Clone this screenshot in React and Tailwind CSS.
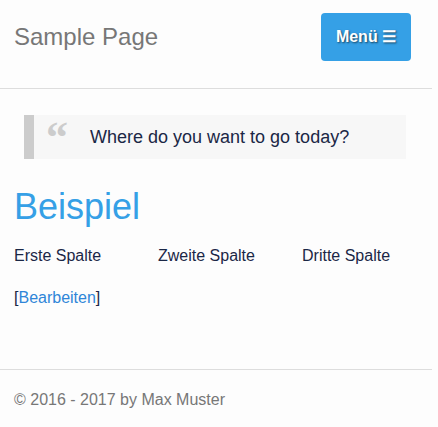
import React from 'react';

const columns = ['Erste Spalte', 'Zweite Spalte', 'Dritte Spalte'];

const App = () => {
  return (
    <div className="min-h-screen bg-[#fdfdfd] font-['Liberation_Sans',Arial,sans-serif]">
      <div className="w-[432px]">
        {/* Header */}
        <header className="flex items-center justify-between pl-[14px] pr-[21px] pt-[13px] pb-[27px] border-b border-[#dddddd]">
          <h1 className="text-[24px] leading-none text-[#777777]">Sample Page</h1>
          <button className="h-[48px] w-[90px] rounded-[4px] bg-[#35a0e6] text-white text-[16px] font-bold [text-shadow:1px_1px_2px_rgba(0,0,0,0.6)]">
            Menü ☰
          </button>
        </header>

        <main className="px-[14px] pt-[26px]">
          {/* Quote */}
          <blockquote className="ml-[10px] mr-[12px] h-[44px] flex items-center border-l-[10px] border-[#cccccc] bg-[#f7f7f7]">
            <span className="self-start mt-[3px] ml-[12px] w-[44px] font-['Liberation_Serif',serif] font-bold text-[44px] leading-[40px] text-[#cccccc]">
              “
            </span>
            <span className="text-[18px] text-[#1b2746]">Where do you want to go today?</span>
          </blockquote>

          <h2 className="mt-[28px] text-[36px] leading-[40px] text-[#35a0e6]">Beispiel</h2>

          <div className="mt-[19px] grid grid-cols-[144px_144px_144px] text-[16px] leading-[20px] text-[#1b2746]">
            {columns.map((c) => (
              <div key={c}>{c}</div>
            ))}
          </div>

          <p className="mt-[22px] text-[16px] leading-[20px] text-[#1b2746]">
            [<a href="#" className="text-[#2f86d8]">Bearbeiten</a>]
          </p>
        </main>

        {/* Footer */}
        <footer className="mt-[61px] border-t border-[#dddddd] px-[14px] pt-[20px] pb-[20px]">
          <p className="text-[16px] leading-[20px] text-[#777777]">© 2016 - 2017 by Max Muster</p>
        </footer>
      </div>
    </div>
  );
};

export default App;
